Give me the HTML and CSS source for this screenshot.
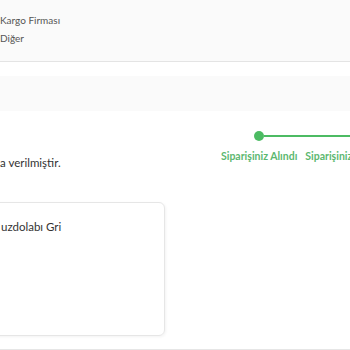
FILE: index.html
```html
<!DOCTYPE html>
<html lang="tr">
<head>
    <meta charset="UTF-8">
    <meta name="viewport" content="width=device-width, initial-scale=1.0">
    <title>Sipariş Detayı</title>
    <link rel="stylesheet" href="styles.css">
</head>
<body>

    <!-- Kargo bilgisi -->
    <div class="info">
        <div class="info-row">Kargo Firması</div>
        <div class="info-row">Diğer</div>
    </div>

    <div class="bar"></div>

    <!-- Sipariş durumu -->
    <div class="status">
        <p class="status-text">a verilmiştir.</p>
        <div class="steps">
            <div class="step done">
                <div class="track">
                    <span class="seg empty"></span>
                    <span class="dot"></span>
                    <span class="seg"></span>
                </div>
                <div class="label">Siparişiniz Alındı</div>
            </div>
            <div class="step done">
                <div class="track">
                    <span class="seg"></span>
                    <span class="dot"></span>
                    <span class="seg"></span>
                </div>
                <div class="label">Siparişiniz Hazırlanıyor</div>
            </div>
        </div>
    </div>

    <!-- Ürün kartı -->
    <div class="product">
        <div class="card">
            <div class="card-title">uzdolabı Gri</div>
        </div>
    </div>

</body>
</html>
```

FILE: styles.css
```css
/* General */
body, html {
    margin: 0;
    padding: 0;
    font-family: 'Lato', sans-serif;
    background-color: #fff;
    color: #333;
    overflow: hidden;
}

/* Kargo bilgisi */
.info {
    background-color: #fafafa;
    border-bottom: 1px solid #e4e4e4;
    height: 62px;
    padding-top: 11px;
    box-sizing: border-box;
}

.info-row {
    font-size: 10px;
    line-height: 18px;
    color: #555;
}

.bar {
    margin-top: 14px;
    height: 35px;
    background-color: #fafafa;
}

/* Sipariş durumu */
.status {
    display: flex;
    height: 91px;
    overflow: hidden;
}

.status-text {
    flex: 0 0 217px;
    margin: 45px 0 0;
    font-size: 11.5px;
    color: #333;
}

.status-text,
.label {
    white-space: nowrap;
}

.steps {
    display: flex;
    margin-top: 20px;
}

.step {
    display: flex;
    flex-direction: column;
    align-items: center;
}

.track {
    display: flex;
    align-items: center;
    width: 100%;
    height: 10px;
}

.seg {
    flex: 1;
    height: 2px;
    background-color: #4cbb63;
}

.seg.empty {
    background-color: transparent;
}

.dot {
    width: 10px;
    height: 10px;
    border-radius: 50%;
    background-color: #4cbb63;
}

.label {
    padding: 0 4px;
    margin-top: 9px;
    font-size: 10.5px;
    font-weight: 700;
    color: #5cb870;
}

/* Ürün kartı */
.product {
    height: 147px;
    border-bottom: 1px solid #e6e6e6;
}

.card {
    width: 175px;
    height: 134px;
    margin-left: -10px;
    border: 1px solid #e6e6e6;
    border-radius: 6px;
    box-shadow: 1px 1px 3px rgba(0, 0, 0, 0.05);
    box-sizing: border-box;
    padding-left: 10px;
}

.card-title {
    margin-top: 17px;
    font-size: 11.5px;
    color: #333;
}
```
